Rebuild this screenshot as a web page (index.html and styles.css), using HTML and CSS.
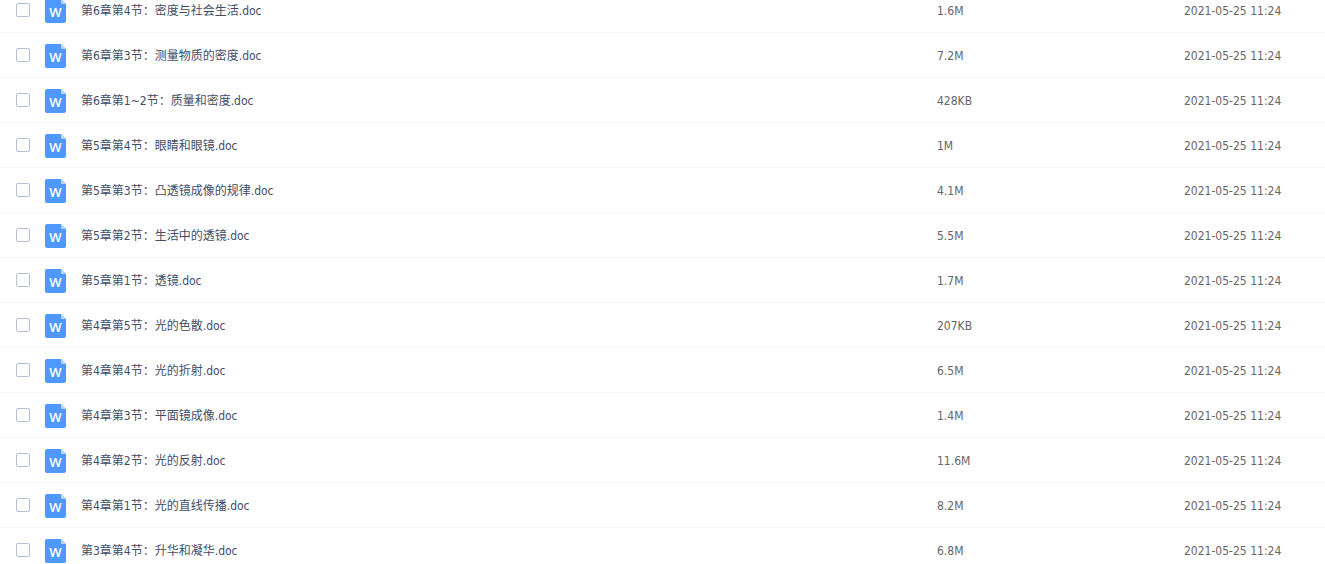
FILE: index.html
```html
<!DOCTYPE html>
<html lang="zh-CN">
  <head>
    <meta charset="utf-8" />
    <title>文件列表</title>
    <link rel="stylesheet" href="styles.css">
  </head>
  <body>
    <div class="file-list">
      <table class="files">
        <colgroup>
          <col class="col-check" />
          <col class="col-name" />
          <col class="col-size" />
          <col class="col-date" />
        </colgroup>
        <tbody id="fileRows"></tbody>
      </table>
    </div>
    <script src="files.js"></script>
  </body>
</html>
```
FILE: styles.css
```css
:root {
  --text: #424e67;
  --muted: #666;
  --line: #f2f6fd;
  --check: #b4c0d4;
}

body {
  margin: 0;
  background: #fff;
  font-family: "DejaVu Sans Condensed", "Noto Sans CJK SC", sans-serif;
  font-size: 12px;
  color: var(--text);
}

.file-list {
  height: 100vh;
  overflow: hidden;
}

/* list is scrolled part way into its first row */
.files {
  width: 100%;
  margin-top: -12px;
  table-layout: fixed;
  border-collapse: separate;
  border-spacing: 0;
}

.col-check {
  width: 45px;
}

.col-size {
  width: 247px;
}

.col-date {
  width: 141px;
}

.files td {
  box-sizing: border-box;
  height: 45px;
  padding: 0;
  border-bottom: 1px solid var(--line);
  line-height: 20px;
  vertical-align: middle;
  white-space: nowrap;
}

.files .check {
  padding-left: 16px;
}

.check input {
  display: block;
  appearance: none;
  box-sizing: border-box;
  width: 14px;
  height: 14px;
  margin: 0;
  border: 1px solid var(--check);
  border-radius: 2px;
  background: #fff;
}

.check input:checked {
  border-color: #4e98ff;
  background: #4e98ff;
}

.name {
  display: flex;
  align-items: center;
  gap: 15px;
  padding-top: 2px;
}

.doc-icon {
  flex: none;
  width: 21px;
  height: 24px;
}

.doc-icon text {
  fill: #fff;
  font-family: "Open Sans", "Noto Sans", sans-serif;
  font-size: 13px;
  font-weight: 600;
  text-anchor: middle;
}

.name a {
  overflow: hidden;
  text-overflow: ellipsis;
  color: var(--text);
  text-decoration: none;
}

.name a:hover {
  color: #4e98ff;
}

.files .size,
.files .date {
  padding-top: 2px;
  color: var(--muted);
}
```
FILE: files.js
```js
const files = [
  ["第6章第4节：密度与社会生活.doc", "1.6M"],
  ["第6章第3节：测量物质的密度.doc", "7.2M"],
  ["第6章第1~2节：质量和密度.doc", "428KB"],
  ["第5章第4节：眼睛和眼镜.doc", "1M"],
  ["第5章第3节：凸透镜成像的规律.doc", "4.1M"],
  ["第5章第2节：生活中的透镜.doc", "5.5M"],
  ["第5章第1节：透镜.doc", "1.7M"],
  ["第4章第5节：光的色散.doc", "207KB"],
  ["第4章第4节：光的折射.doc", "6.5M"],
  ["第4章第3节：平面镜成像.doc", "1.4M"],
  ["第4章第2节：光的反射.doc", "11.6M"],
  ["第4章第1节：光的直线传播.doc", "8.2M"],
  ["第3章第4节：升华和凝华.doc", "6.8M"],
];

const docIcon = `
  <svg class="doc-icon" viewBox="0 0 21 24" aria-hidden="true">
    <path fill="#4e98ff" d="M2 0h14l5 5v17a2 2 0 0 1-2 2H2a2 2 0 0 1-2-2V2a2 2 0 0 1 2-2z" />
    <path fill="#b8d6ff" d="M16 0l5 5h-4a1 1 0 0 1-1-1z" />
    <text x="10.5" y="18">W</text>
  </svg>`;

document.getElementById("fileRows").innerHTML = files
  .map(
    ([name, size], i) => `
      <tr>
        <td class="check"><input type="checkbox" id="file${i}" aria-labelledby="name${i}" /></td>
        <td>
          <div class="name">
            ${docIcon}
            <a href="#" id="name${i}">${name}</a>
          </div>
        </td>
        <td class="size">${size}</td>
        <td class="date">2021-05-25 11:24</td>
      </tr>`
  )
  .join("");
```
